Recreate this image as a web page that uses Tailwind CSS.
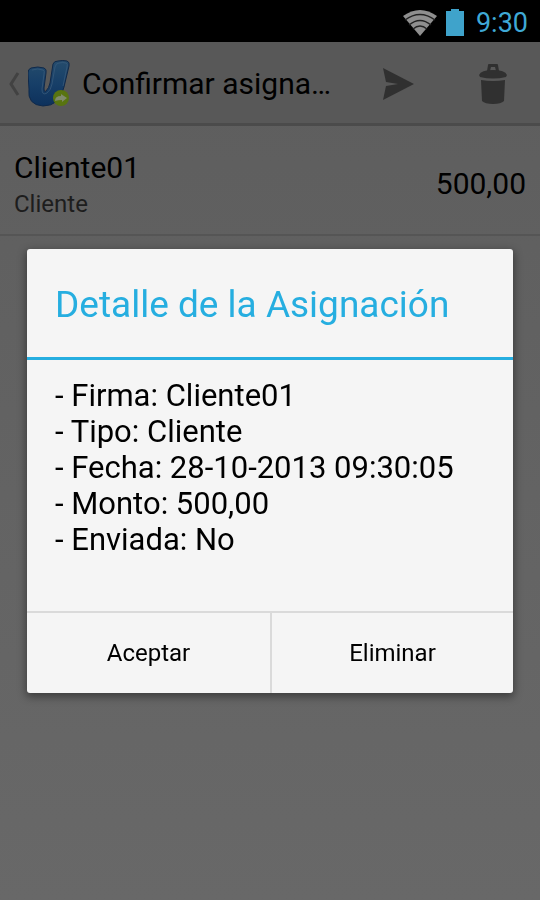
<!DOCTYPE html>
<html lang="es">
<head>
  <meta charset="UTF-8" />
  <meta name="viewport" content="width=device-width, initial-scale=1.0"/>
  <title>Confirmar asignación</title>
  <script src="https://cdn.jsdelivr.net/npm/@tailwindcss/browser@4"></script>
</head>
<body class="min-h-screen flex flex-col bg-linear-to-b from-[#5d5d5d] to-[#686868] font-[Roboto,sans-serif] text-black">

  <!-- Status bar -->
  <div class="h-[42px] shrink-0 bg-black flex items-center justify-end gap-2 pt-1 pr-3">
    <svg class="w-9 h-7" viewBox="0 0 36 28" fill="none">
      <path d="M18 27 L1 7 Q18 -5 35 7 Z" fill="#8f8f8f"/>
      <path d="M3 11 Q18 0 33 11 M7 16 Q18 7 29 16 M11 20 Q18 14 25 20" stroke="#222" stroke-width="1.4"/>
    </svg>
    <svg class="w-[18px] h-7" viewBox="0 0 18 28" fill="#3fa3cb">
      <path d="M5 0 H13 V2 H18 V27 H0 V2 H5 Z"/>
    </svg>
    <span class="text-[27px] leading-8 text-[#3fa9d6] ml-1">9:30</span>
  </div>

  <!-- Action bar -->
  <header class="h-[84px] shrink-0 flex items-center bg-[#585858] border-b-3 border-[#4b4b4b] pt-[2px] pl-2">
    <a href="#" aria-label="Atrás" class="flex items-center gap-2 shrink-0">
      <svg class="w-3 h-6" viewBox="0 0 12 24" fill="none" stroke="#424242" stroke-width="3">
        <path d="M10 1 L3 12 L10 23"/>
      </svg>
      <svg class="w-[42px] h-12" viewBox="0 0 42 48">
        <defs>
          <linearGradient id="blue" x1="0" y1="0" x2="0" y2="1">
            <stop offset="0" stop-color="#254c6c"/>
            <stop offset="0.5" stop-color="#173f68"/>
            <stop offset="1" stop-color="#0d315c"/>
          </linearGradient>
        </defs>
        <path d="M3 8 Q10 6 16 8 Q19 9 18 13 L16 28 Q16 33 18 31 Q21 28 22 23 L25 4 Q26 1 30 1 Q35 0 39 1 Q42 2 41 6 L36 27 Q32 46 15 46 Q-1 45 1 29 L0 13 Q0 9 3 8 Z" fill="url(#blue)" stroke="#10294a" stroke-width="1"/>
        <path d="M4 10 Q10 8 15 10 Q17 11 16 14 L14 29 Q14 36 19 33 Q23 30 24 24 L27 7 Q28 3 31 3 Q35 2 38 3 Q40 4 39 7 L35 26" fill="none" stroke="#37597a" stroke-width="0.8"/>
        <circle cx="33" cy="38" r="8" fill="#587410"/>
        <path d="M27 41 Q27 36 33 36 V34 L39 38 L34 42 V40 Q30 40 27 41 Z" fill="#7f8a6c"/>
      </svg>
    </a>
    <h1 class="flex-1 min-w-0 truncate text-[30px] leading-9 ml-3">Confirmar asigna…</h1>
    <button type="button" aria-label="Enviar" class="w-[95px] h-full shrink-0 flex items-center justify-center">
      <svg class="w-8 h-8" viewBox="0 0 32 32" fill="#303030">
        <path d="M1 0 L32 16 L1 32 L4 18 L16 16 L4 14 Z"/>
      </svg>
    </button>
    <button type="button" aria-label="Eliminar asignación" class="w-[95px] h-full shrink-0 flex items-center justify-center">
      <svg class="w-7 h-10" viewBox="0 0 28 40" fill="#303030">
        <path d="M8 7 L9 1 Q9 0 10 0 H18 Q19 0 19 1 L20 7 H17 L16 3 H12 L11 7 Z"/>
        <path d="M0 11 Q2 6 14 6 Q26 6 28 11 L27 13 Q14 16 1 13 Z"/>
        <path d="M2 16 Q14 18 26 16 L25 37 Q22 40 14 40 Q6 40 3 37 Z"/>
      </svg>
    </button>
  </header>

  <!-- Assignment list -->
  <main>
    <ul>
      <li class="h-[110px] flex items-center justify-between border-b-2 border-[#555555] pt-2 px-[14px]">
        <div class="pt-1">
          <p class="text-[30px] leading-9">Cliente01</p>
          <p class="text-[24px] leading-9 text-[#1d1d1d]">Cliente</p>
        </div>
        <span class="text-[30px] leading-9">500,00</span>
      </li>
    </ul>
  </main>

  <!-- Detail dialog -->
  <div class="fixed inset-x-0 top-[42px] bottom-0 flex items-center px-[27px]">
    <section role="dialog" aria-labelledby="dialog-title" class="w-full bg-[#f5f5f5] rounded-[3px] shadow-[0_3px_8px_1px_rgba(0,0,0,0.4)] overflow-hidden">
      <h2 id="dialog-title" class="px-7 pt-[34px] pb-[30px] text-[37px] leading-11 text-[#26aee0] border-b-3 border-[#26aee0]">Detalle de la Asignación</h2>
      <div class="px-7 pt-[18px] pb-[53px] text-[31px] leading-9">
        <p>- Firma: Cliente01</p>
        <p>- Tipo: Cliente</p>
        <p>- Fecha: 28-10-2013 09:30:05</p>
        <p>- Monto: 500,00</p>
        <p>- Enviada: No</p>
      </div>
      <div class="grid grid-cols-2 border-t-2 border-[#dadada] text-[24px] leading-8">
        <button type="button" class="h-20">Aceptar</button>
        <button type="button" class="h-20 border-l-2 border-[#dadada]">Eliminar</button>
      </div>
    </section>
  </div>

</body>
</html>
